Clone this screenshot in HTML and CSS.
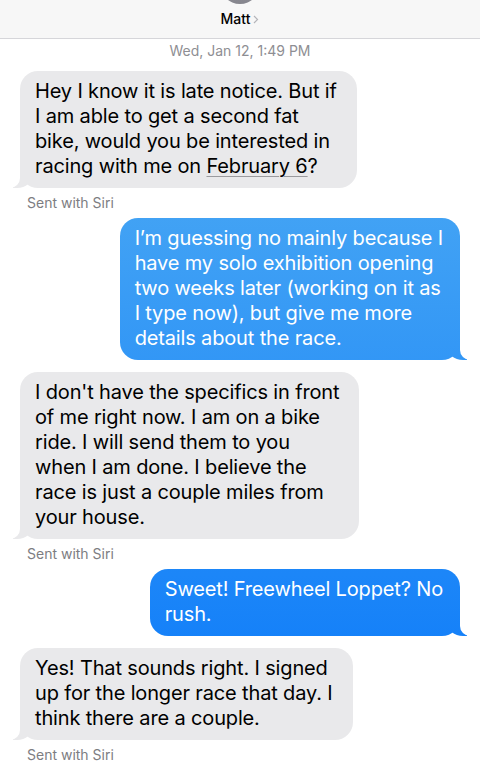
FILE: index.html
```html
<!DOCTYPE html>
<html lang="en">

<head>
    <meta charset="UTF-8" />
    <meta name="viewport" content="width=device-width, initial-scale=1.0" />
    <title>Matt</title>
    <link rel="stylesheet" href="styles.css">
</head>

<body>
    <div class="header">
        <div class="avatar"></div>
        <div class="name">
            Matt
            <svg class="chevron" width="6" height="9" viewBox="0 0 6 9">
                <path d="M1 1l3.5 3.5L1 8" fill="none" stroke="#b4b4b9" stroke-width="1.2" />
            </svg>
        </div>
    </div>

    <div class="thread">
        <div class="time">Wed, Jan 12, 1:49 PM</div>

        <div class="msg in">
            Hey I know it is late notice. But if<br>
            I am able to get a second fat<br>
            bike, would you be interested in<br>
            racing with me on <span class="link">February 6</span>?
        </div>
        <div class="note">Sent with Siri</div>

        <div class="msg out">
            I’m guessing no mainly because I<br>
            have my solo exhibition opening<br>
            two weeks later (working on it as<br>
            I type now), but give me more<br>
            details about the race.
        </div>

        <div class="msg in">
            I don't have the specifics in front<br>
            of me right now. I am on a bike<br>
            ride. I will send them to you<br>
            when I am done. I believe the<br>
            race is just a couple miles from<br>
            your house.
        </div>
        <div class="note">Sent with Siri</div>

        <div class="msg out">
            Sweet! Freewheel Loppet? No<br>
            rush.
        </div>

        <div class="msg in">
            Yes! That sounds right. I signed<br>
            up for the longer race that day. I<br>
            think there are a couple.
        </div>
        <div class="note">Sent with Siri</div>
    </div>
</body>

</html>
```

FILE: styles.css
```css
* {
    box-sizing: border-box;
}

body {
    margin: 0;
    font-family: Inter, 'Liberation Sans', sans-serif;
    background: #fff;
    color: #000;
}

.header {
    height: 39px;
    background: #f7f7f7;
    border-bottom: 1px solid #d6d6da;
    display: flex;
    flex-direction: column;
    align-items: center;
    overflow: hidden;
}

.avatar {
    flex-shrink: 0;
    width: 40px;
    height: 40px;
    margin-top: -36px;
    border-radius: 50%;
    background: linear-gradient(#a4a4aa, #85858d);
}

.name {
    margin-top: 7px;
    font-size: 14px;
    font-weight: 500;
    line-height: 16px;
    display: flex;
    align-items: center;
    gap: 3px;
}

.thread {
    display: flex;
    flex-direction: column;
    padding: 0 20px;
}

.time {
    align-self: center;
    margin: 4px 0 12px;
    font-size: 14px;
    line-height: 16px;
    color: #8e8e93;
}

.msg {
    position: relative;
    margin-bottom: 12px;
    padding: 8px 20px 9px 15px;
    border-radius: 18px;
    font-size: 20px;
    line-height: 25px;
    letter-spacing: -0.15px;
}

.msg::before,
.msg::after {
    content: "";
    position: absolute;
    bottom: 0;
    height: 20px;
}

.msg.in {
    align-self: flex-start;
    background: #e9e9eb;
}

.msg.in::before {
    left: -7px;
    width: 20px;
    background: inherit;
    border-bottom-right-radius: 16px 14px;
}

.msg.in::after {
    left: -26px;
    width: 26px;
    background: #fff;
    border-bottom-right-radius: 10px;
}

.msg.out {
    align-self: flex-end;
    padding-right: 17px;
    color: #fff;
    background: linear-gradient(#58b3f2, #0877fa) fixed;
}

.msg.out::before {
    right: -7px;
    width: 20px;
    background: inherit;
    border-bottom-left-radius: 16px 14px;
}

.msg.out::after {
    right: -26px;
    width: 26px;
    background: #fff;
    border-bottom-left-radius: 10px;
}

.link {
    text-decoration: underline;
    text-decoration-color: #9a9a9e;
    text-decoration-thickness: 1px;
    text-underline-offset: 3px;
}

.msg + .note {
    margin-top: -5px;
}

.note {
    margin: 0 0 7px 7px;
    font-size: 14px;
    line-height: 16px;
    color: #7d7d82;
}
```
